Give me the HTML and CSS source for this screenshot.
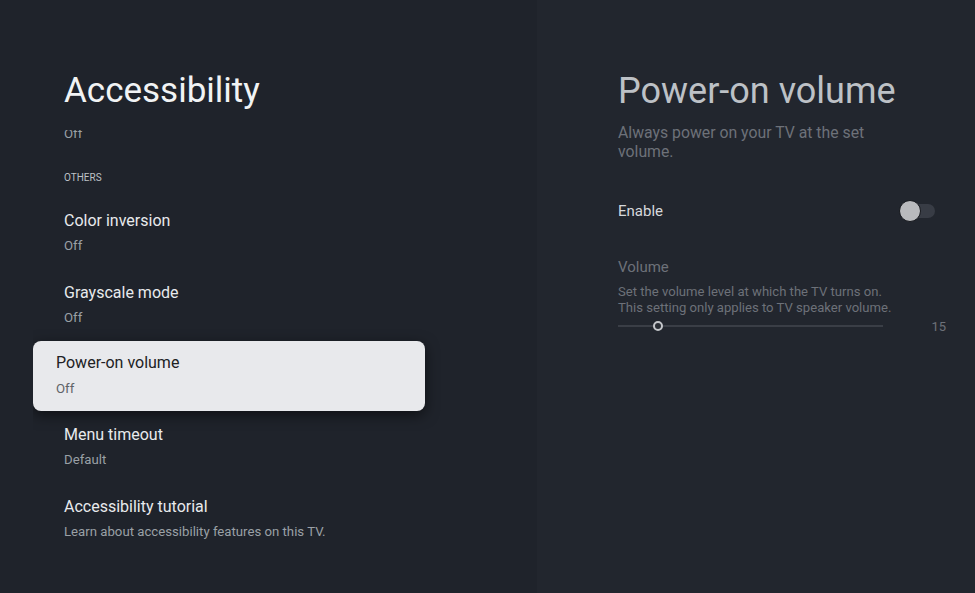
FILE: index.html
```html
<!DOCTYPE html>
<html lang="en">
<head>
    <meta charset="UTF-8">
    <meta name="viewport" content="width=device-width, initial-scale=1.0">
    <title>Accessibility</title>
    <link rel="stylesheet" href="styles.css">
</head>
<body>

    <!-- Settings list -->
    <div class="menu-panel">
        <h1 class="panel-title">Accessibility</h1>

        <div class="list-viewport">
            <div class="settings-list">
                <!-- previous item, scrolled mostly out of view -->
                <div class="setting-item scrolled">
                    <div class="setting-value">Off</div>
                </div>

                <div class="section-label">OTHERS</div>

                <div class="setting-item">
                    <div class="setting-name">Color inversion</div>
                    <div class="setting-value">Off</div>
                </div>
                <div class="setting-item">
                    <div class="setting-name">Grayscale mode</div>
                    <div class="setting-value">Off</div>
                </div>
                <div class="setting-item selected">
                    <div class="setting-name">Power-on volume</div>
                    <div class="setting-value">Off</div>
                </div>
                <div class="setting-item">
                    <div class="setting-name">Menu timeout</div>
                    <div class="setting-value">Default</div>
                </div>
                <div class="setting-item">
                    <div class="setting-name">Accessibility tutorial</div>
                    <div class="setting-value">Learn about accessibility features on this TV.</div>
                </div>
            </div>
        </div>
    </div>

    <!-- Detail panel -->
    <div class="detail-panel">
        <h2 class="detail-title">Power-on volume</h2>
        <p class="detail-desc">Always power on your TV at the set volume.</p>

        <div class="toggle-row">
            <span class="toggle-label">Enable</span>
            <span class="switch">
                <span class="switch-track"></span>
                <span class="switch-knob"></span>
            </span>
        </div>

        <div class="volume-label">Volume</div>
        <p class="volume-desc">Set the volume level at which the TV turns on.<br>This setting only applies to TV speaker volume.</p>

        <div class="slider-row">
            <div class="slider">
                <div class="slider-thumb" style="left: 15%;"></div>
            </div>
            <span class="slider-value">15</span>
        </div>
    </div>

</body>
</html>
```

FILE: styles.css
```css
/* Basic Layout */
body {
    margin: 0;
    display: flex;
    height: 593px;
    overflow: hidden;
    font-family: Roboto, "Noto Sans", sans-serif;
    background: #22262e;
}

.menu-panel {
    width: 537px;
    flex-shrink: 0;
    background: #1f232b;
    padding-left: 33px;
    box-sizing: border-box;
}

.panel-title {
    margin: 0 0 0 31px;
    padding-top: 69px;
    font-size: 35px;
    line-height: 44px;
    font-weight: 400;
    color: #f1f3f4;
}

/* Scrolled list */
.list-viewport {
    margin-top: 17px;
    height: 463px;
    padding-left: 31px;
    overflow: hidden;
}

.settings-list {
    margin-top: -10px;
}

.section-label {
    padding-top: 14px;
    margin-bottom: 12px;
    font-size: 10px;
    line-height: 14px;
    color: #bdc1c6;
}

.setting-item {
    padding: 13px 0;
}

.setting-item.scrolled {
    padding-top: 0;
}

.setting-name {
    font-size: 16px;
    line-height: 22px;
    color: #e8eaed;
}

.setting-value {
    margin-top: 4px;
    font-size: 13.2px;
    line-height: 20px;
    color: #9aa0a6;
}

.setting-item.selected {
    width: 392px;
    height: 70px;
    margin-left: -31px;
    padding: 11px 23px;
    box-sizing: border-box;
    background: #e8e9ec;
    border-radius: 8px;
    box-shadow: 0 4px 14px rgba(0, 0, 0, 0.55);
}

.setting-item.selected .setting-name {
    color: #202124;
}

.setting-item.selected .setting-value {
    margin-top: 5px;
    color: #5f6368;
}

/* Detail panel */
.detail-panel {
    flex: 1;
    padding: 0 29px 0 81px;
}

.detail-title {
    margin: 0;
    padding-top: 69px;
    font-size: 36px;
    line-height: 44px;
    font-weight: 400;
    color: #bdc1c6;
}

.detail-desc {
    margin: 10px 0 0;
    max-width: 275px;
    font-size: 15.8px;
    line-height: 19px;
    color: #6d7179;
}

.toggle-row {
    display: flex;
    justify-content: space-between;
    align-items: center;
    margin-top: 39px;
    height: 22px;
    padding-right: 11px;
}

.toggle-label {
    font-size: 15px;
    color: #d6d8dc;
}

.switch {
    position: relative;
    width: 36px;
    height: 22px;
}

.switch-track {
    position: absolute;
    left: 6px;
    top: 4px;
    width: 30px;
    height: 14px;
    border-radius: 7px;
    background: #383c45;
}

.switch-knob {
    position: absolute;
    left: 0;
    top: 0;
    width: 20px;
    height: 20px;
    border-radius: 50%;
    background: #b9babd;
    border: 1px solid #15171c;
}

.volume-label {
    margin-top: 34px;
    font-size: 15px;
    line-height: 22px;
    color: #6d7179;
}

.volume-desc {
    margin: 6px 0 0;
    font-size: 13.1px;
    line-height: 16px;
    color: #6d7179;
}

/* Slider */
.slider-row {
    display: flex;
    align-items: center;
    justify-content: space-between;
    margin-top: 2px;
    height: 16px;
}

.slider {
    position: relative;
    width: 265px;
    height: 2px;
    background: #3a3e46;
}

.slider-thumb {
    position: absolute;
    top: -4px;
    width: 6px;
    height: 6px;
    margin-left: -5px;
    border-radius: 50%;
    background: #2a2e35;
    border: 2px solid #c4c6ca;
}

.slider-value {
    font-size: 13px;
    color: #6d7179;
}
```
